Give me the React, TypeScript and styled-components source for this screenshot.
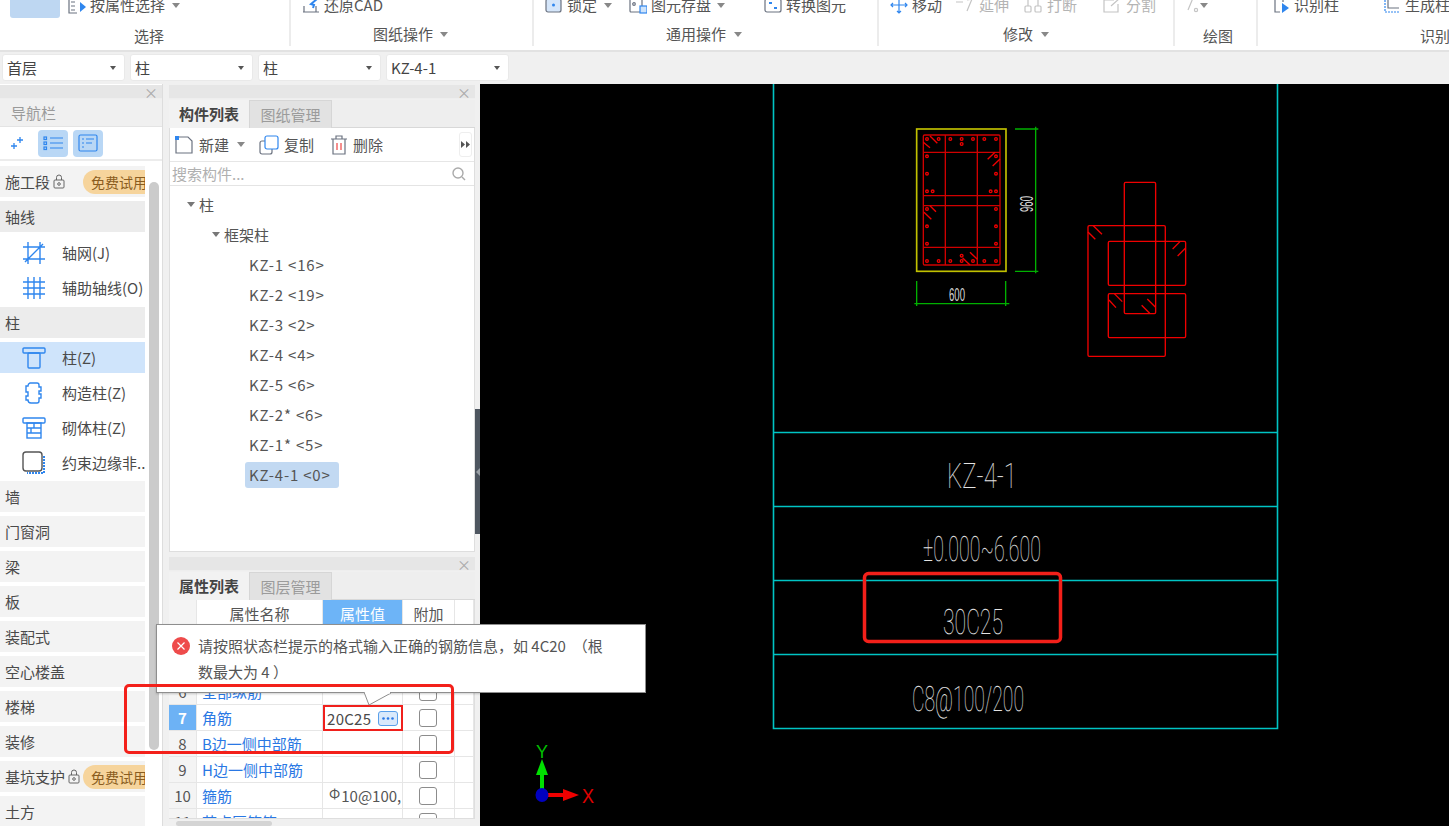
import React from "react";
import styled, { createGlobalStyle } from "styled-components";

const Global = createGlobalStyle`
  html, body { margin: 0; padding: 0; width: 1449px; height: 826px; overflow: hidden; background: #f0f0f0; }
  body { font-family: "Noto Sans CJK SC", "Liberation Sans", sans-serif; font-size: 15px; color: #4a4a4a; }
  * { box-sizing: border-box; }
`;

const Page = styled.div`
  position: relative; width: 1449px; height: 826px; overflow: hidden;
  display: flex; flex-direction: column;
`;

/* ---------- ribbon ---------- */
const Ribbon = styled.div`
  height: 52px; flex: none; background: #fff; border-bottom: 2px solid #e2e2e2; display: flex; align-items: flex-start;
`;
const Group = styled.div<{ $w: number; $last?: boolean; $pad: number }>`
  width: ${p => p.$w}px; height: 46px; flex: none; padding-left: ${p => p.$pad}px;
  border-right: ${p => (p.$last ? "none" : "2px solid #ececec")};
  display: flex; flex-direction: column;
`;
const ToolRow = styled.div`
  height: 22px; margin-top: -6px; display: flex; align-items: center; white-space: nowrap; flex: none;
`;
const Selected = styled.div`
  width: 50px; height: 26px; background: #bed7f2; border-radius: 3px; margin-right: 8px; flex: none;
`;
const Tool = styled.div<{ $ml?: number; $muted?: boolean }>`
  display: flex; align-items: center; gap: 4px; margin-left: ${p => p.$ml ?? 0}px;
  color: ${p => (p.$muted ? "#b4b4b4" : "#555")}; font-size: 15px; line-height: 22px;
`;
const Caret = styled.span<{ $ml?: number }>`
  display: inline-block; width: 0; height: 0; margin-left: ${p => p.$ml ?? 6}px;
  border-left: 4px solid transparent; border-right: 4px solid transparent; border-top: 5px solid #888;
`;
const GroupLabel = styled.div<{ $x: number; $low?: boolean }>`
  margin-top: ${p => (p.$low ? 10 : 8)}px; padding-left: ${p => p.$x}px; font-size: 15px; line-height: 20px;
  color: #555; white-space: nowrap; display: flex; align-items: center;
`;

/* ---------- selector bar ---------- */
const SelectBar = styled.div`
  height: 32px; flex: none; background: #f0f0f0; display: flex; gap: 5px; padding: 2px 0 0 2px;
`;
const Select = styled.div`
  width: 123px; height: 27px; background: #fff; border: 1px solid #e9e9e9; border-radius: 3px; padding: 0 8px 0 4px;
  display: flex; align-items: center; justify-content: space-between; font-size: 15px; color: #444; line-height: 24px;
`;
const SelectCaret = styled.span`
  width: 0; height: 0; border-left: 3px solid transparent; border-right: 3px solid transparent; border-top: 4px solid #555;
`;

/* ---------- workspace ---------- */
const Work = styled.div`
  flex: 1; min-height: 0; display: flex;
`;
const Nav = styled.div`
  position: relative; width: 163px; flex: none; background: #fff; overflow: hidden; border-right: 1px solid #ddd;
`;
const PanelBar = styled.div`
  height: 14px; margin-top: 1px; background: #e6e6e6; display: flex; justify-content: flex-end; align-items: center; padding-right: 4px;
  color: #aaa; font-size: 14px; line-height: 14px; border-bottom: 1px solid #eee; flex: none;
`;
const NavTitle = styled.div`
  height: 28px; background: #f0f0f0; color: #9a9a9a; font-size: 15px; padding-left: 11px; line-height: 27px; border-bottom: 1px solid #e4e4e4;
`;
const NavIcons = styled.div`
  height: 34px; display: flex; align-items: center; gap: 5px; padding-left: 3px; border-bottom: 2px solid #ececec;
`;
const NavIconBtn = styled.div<{ $on?: boolean }>`
  width: 30px; height: 27px; border-radius: 4px; background: ${p => (p.$on ? "#b9d7f5" : "transparent")};
  display: flex; align-items: center; justify-content: center;
`;
const NavList = styled.div`
  width: 145px; padding-top: 5px;
`;
const Section = styled.div<{ $light?: boolean; $mb?: number }>`
  height: 31px; margin-bottom: ${p => p.$mb ?? 4}px; background: ${p => (p.$light ? "#f3f3f3" : "#ececec")};
  display: flex; align-items: center; padding-left: 5px; font-size: 15px; color: #4a4a4a; white-space: nowrap; overflow: hidden;
  flex: none;
`;
const Lock = styled.svg`
  margin-left: 3px; flex: none;
`;
const Trial = styled.span<{ $ml: number }>`
  margin-left: ${p => p.$ml}px; height: 24px; padding: 0 0 0 8px; border-radius: 12px 0 0 12px; background: #f6d49c;
  color: #8a5c20; font-size: 14px; line-height: 24px; flex: none; width: 70px;
`;
const NavItem = styled.div<{ $on?: boolean; $mb?: number }>`
  height: 31px; margin-bottom: ${p => p.$mb ?? 4}px; display: flex; align-items: center; padding-left: 22px; gap: 16px;
  background: ${p => (p.$on ? "#cfe4fb" : "transparent")}; font-size: 15px; color: #4a4a4a; white-space: nowrap; overflow: hidden;
`;
const NavScroll = styled.div`
  position: absolute; left: 149px; top: 98px; width: 10px; height: 568px; border-radius: 5px; background: #cbcbcb;
`;

const Middle = styled.div`
  width: 306px; margin-left: 6px; flex: none; display: flex; flex-direction: column;
`;
const Tabs = styled.div`
  height: 28px; display: flex; background: #eeeeee; margin-top: 1px; border-bottom: 1px solid #d8d8d8; flex: none;
`;
const Tab = styled.div<{ $on?: boolean }>`
  width: ${p => (p.$on ? 81 : 82)}px; height: 28px; text-align: center; line-height: 27px; font-size: 15px;
  font-weight: ${p => (p.$on ? 700 : 400)}; color: ${p => (p.$on ? "#444" : "#9b9b9b")};
  background: ${p => (p.$on ? "#f2f2f2" : "#e2e2e2")};
  border-right: 1px solid #d6d6d6; border-top: ${p => (p.$on ? "0" : "1px solid #d6d6d6")};
`;
const ListBody = styled.div`
  height: 424px; flex: none; background: #fff; border: 1px solid #dedede; border-top: 0; display: flex; flex-direction: column;
`;
const Toolbar = styled.div`
  height: 34px; display: flex; align-items: center; padding-left: 4px; border-bottom: 1px solid #e6e6e6; position: relative; flex: none;
`;
const ToolbarBtn = styled.div<{ $ml?: number }>`
  display: flex; align-items: center; gap: 5px; font-size: 15px; color: #555; margin-left: ${p => p.$ml ?? 0}px;
`;
const More = styled.div`
  position: absolute; right: 2px; top: 4px; width: 13px; height: 25px; border-radius: 3px; background: #fff; border: 1px solid #eee;
  display: flex; align-items: center; justify-content: center;
`;
const Search = styled.div`
  height: 24px; padding: 0 8px 0 2px; display: flex; align-items: center; justify-content: space-between; color: #b0b0b0;
  font-size: 15px; border-bottom: 1px solid #e4e4e4; flex: none;
`;
const Tree = styled.div`
  padding-top: 3px; flex: 1;
`;
const TreeRow = styled.div<{ $indent: number }>`
  height: 30px; display: flex; align-items: center; padding-left: ${p => p.$indent}px; font-size: 15px; color: #555; white-space: pre;
`;
const TreeText = styled.span<{ $on?: boolean }>`
  padding: 0 ${p => (p.$on ? 8 : 4)}px 0 4px; margin-top: 1px; height: 26px; line-height: 26px; border-radius: 3px; letter-spacing: .8px;
  background: ${p => (p.$on ? "#c2d9f2" : "transparent")};
`;
const TreeCaret = styled.span`
  width: 0; height: 0; margin-right: 4px; border-left: 4px solid transparent; border-right: 4px solid transparent; border-top: 5px solid #777;
`;
const Gap = styled.div`
  height: 4px; flex: none;
`;
const Table = styled.div`
  flex: none; height: 219px; overflow: hidden; background: #fff; border-right: 1px solid #dedede; border-bottom: 1px solid #dedede;
`;
const Row = styled.div<{ $h?: number }>`
  display: grid; grid-template-columns: 28px 126px 80px 52px 1fr; height: ${p => p.$h ?? 26}px;
`;
const Cell = styled.div<{ $kind?: "num" | "numOn" | "head" | "headOn" | "name" | "val" | "chk" }>`
  display: flex; align-items: center; min-width: 0; overflow: hidden; white-space: nowrap; font-size: 15px;
  border-bottom: 1px solid #e6e6e6; border-right: 1px solid #e6e6e6;
  ${p => p.$kind === "num" && "background:#f4f4f4;justify-content:center;color:#555;"}
  ${p => p.$kind === "numOn" && "background:#6db2f5;justify-content:center;color:#fff;font-weight:700;"}
  ${p => p.$kind === "head" && "justify-content:center;color:#555;"}
  ${p => p.$kind === "headOn" && "justify-content:center;color:#fff;background:#6db4f7;"}
  ${p => p.$kind === "name" && "color:#2a78e4;padding-left:5px;"}
  ${p => p.$kind === "val" && "color:#555;padding-left:6px;"}
  ${p => p.$kind === "chk" && "justify-content:center;"}
`;
const Check = styled.span`
  width: 18px; height: 18px; border: 1px solid #8c8c8c; border-radius: 3px; background: #fff; margin-left: -1px;
`;
const BarSymbol = styled.span`
  font-size: 14px; line-height: 14px; margin: -5px 1px 0 0;
`;
const HScroll = styled.div`
  height: 5px; margin: 2px 0 0 7px; width: 96px; border-radius: 3px; background: #d4d4d4; flex: none;
`;
const EditCell = styled(Cell)`
  border: 2px solid #f0201c; padding-left: 2px; justify-content: space-between; padding-right: 3px; letter-spacing: .3px;
`;
const Dots = styled.span`
  width: 20px; height: 15px; border: 1px solid #5aa0ea; border-radius: 3px; background: #d9e9fb;
  display: flex; align-items: center; justify-content: center; flex: none;
`;
const Splitter = styled.div`
  width: 5px; flex: none; display: flex; align-items: flex-start;
`;
const Grip = styled.div`
  width: 5px; height: 125px; margin-top: 325px; background: #4e5660; display: flex; align-items: center; justify-content: center;
  &::after {
    content: ""; width: 0; height: 0; border-top: 4px solid transparent; border-bottom: 4px solid transparent; border-right: 4px solid #9aa0a6;
  }
`;
const Canvas = styled.svg`
  flex: 1; height: 742px; background: #000; display: block;
`;

/* ---------- overlays ---------- */
const Tip = styled.div`
  position: absolute; left: 156px; top: 624px; width: 490px; height: 69px; background: #fff; border: 1px solid #8e8e8e;
  padding: 8px 40px 0 41px; font-size: 15px; line-height: 26px; color: #555; box-shadow: 0 1px 2px #0003;
`;
const TipIcon = styled.svg`
  position: absolute; left: 15px; top: 12px;
`;
const TipArrow = styled.svg`
  position: absolute; left: 360px; top: 692px;
`;
const Callout = styled.div`
  position: absolute; left: 124px; top: 684px; width: 330px; height: 70px; border: 3px solid #f3201a; border-radius: 5px;
`;

/* ---------- icon helpers ---------- */
const Ic = ({ w = 18, h = 18, children }: { w?: number; h?: number; children: React.ReactNode }) => (
  <svg width={w} height={h} viewBox={`0 0 ${w} ${h}`} fill="none" stroke="#6b7280" strokeWidth="1.2" style={{ flex: "none" }}>{children}</svg>
);
const BLUE = "#2f86ee";

const LockIcon = () => (
  <Lock width="12" height="15" viewBox="0 0 12 15" fill="none" stroke="#666" strokeWidth="1">
    <rect x="1" y="6" width="10" height="8" rx="1" />
    <path d="M3.5 6V3.5a2.5 2.5 0 0 1 5 0V6" />
    <circle cx="6" cy="10" r="1.3" />
  </Lock>
);

const NavSvg = ({ children }: { children: React.ReactNode }) => (
  <svg width="24" height="24" viewBox="0 0 24 24" fill="none" stroke={BLUE} strokeWidth="1.4" style={{ flex: "none" }}>{children}</svg>
);

const names: [string, string][] = [
  ["KZ-1", "<16>"], ["KZ-2", "<19>"], ["KZ-3", "<2>"], ["KZ-4", "<4>"], ["KZ-5", "<6>"], ["KZ-2*", "<6>"], ["KZ-1*", "<5>"],
];

/* CAD drawing data, in 3x coordinates of the crop at (880,110) */
const dotsX = [141, 176, 211, 245, 279, 313, 348];
const dotsY = [139, 191, 244, 297, 349, 401];
const dots: [number, number][] = [
  ...dotsX.map(x => [x, 87] as [number, number]),
  ...dotsX.map(x => [x, 453] as [number, number]),
  ...dotsY.map(y => [141, y] as [number, number]),
  ...dotsY.map(y => [348, y] as [number, number]),
  [245, 102], [158, 244], [332, 244], [245, 437],
];
const slashes = [
  [150, 78, 172, 100], [130, 97, 150, 113], [323, 148, 345, 127], [338, 168, 360, 147],
  [150, 287, 168, 305], [132, 307, 154, 328], [270, 427, 292, 448], [248, 444, 270, 465],
  [640, 347, 666, 373], [624, 366, 646, 388], [878, 417, 900, 395], [893, 438, 917, 414],
  [703, 551, 727, 575], [687, 570, 708, 593], [802, 567, 826, 591], [785, 586, 809, 610],
];

export default function App() {
  return (
    <Page>
      <Global />
      <Ribbon>
        <Group $w={291} $pad={10}>
          <ToolRow>
            <Selected />
            <Tool>
              <Ic><path d="M9 2H1v15h8M3 6h4M3 10h4M3 14h4" /><path d="M12 6l6 5-6 5z" fill={BLUE} stroke="none" /></Ic>
              按属性选择<Caret $ml={3} />
            </Tool>
          </ToolRow>
          <GroupLabel $x={124} $low>选择</GroupLabel>
        </Group>
        <Group $w={243} $pad={11}>
          <ToolRow>
            <Tool>
              <Ic><path d="M2 10v6M1 16h16M14 10v6" /><path d="M15 3l-6 5 3 1-1 3" stroke={BLUE} strokeWidth="2" /></Ic>
              还原CAD
            </Tool>
          </ToolRow>
          <GroupLabel $x={71}>图纸操作<Caret $ml={7} /></GroupLabel>
        </Group>
        <Group $w={345} $pad={11}>
          <ToolRow>
            <Tool>
              <Ic><rect x="1" y="3" width="15" height="13" rx="2" fill="#d5e6fa" /><circle cx="8.5" cy="9" r="1.5" fill={BLUE} stroke="none" /></Ic>
              锁定<Caret $ml={3} />
            </Tool>
            <Tool $ml={17}>
              <Ic><rect x="1" y="3" width="12" height="13" rx="1" /><circle cx="5" cy="8" r="1.3" /><rect x="11" y="10" width="7" height="7" fill="#cfe4fb" stroke={BLUE} /></Ic>
              图元存盘<Caret $ml={2} />
            </Tool>
            <Tool $ml={39}>
              <Ic><rect x="1" y="3" width="16" height="13" rx="2" /><path d="M5 7h3M10 12h3" stroke={BLUE} strokeWidth="2" /></Ic>
              转换图元
            </Tool>
          </ToolRow>
          <GroupLabel $x={121}>通用操作<Caret $ml={8} /></GroupLabel>
        </Group>
        <Group $w={296} $pad={11}>
          <ToolRow>
            <Tool>
              <Ic><path d="M9 1v16M1 9h16M7 3l2-2 2 2M7 15l2 2 2-2M3 7L1 9l2 2M15 7l2 2-2 2" stroke={BLUE} /></Ic>
              移动
            </Tool>
            <Tool $ml={13} $muted>
              <Ic w={20}><path d="M1 6h7M12 4l5-1-5 12" stroke="#c4c4c4" /></Ic>
              延伸
            </Tool>
            <Tool $ml={14} $muted>
              <Ic w={20}><rect x="2" y="10" width="6" height="6" rx="1" stroke="#c4c4c4" /><rect x="12" y="10" width="6" height="6" rx="1" stroke="#c4c4c4" /><path d="M5 10V2M15 10V2" stroke="#c4c4c4" /></Ic>
              打断
            </Tool>
            <Tool $ml={25} $muted>
              <Ic w={20}><path d="M2 4h10M2 4v12h14V8M18 2L9 10" stroke="#c4c4c4" /></Ic>
              分割
            </Tool>
          </ToolRow>
          <GroupLabel $x={113}>修改<Caret $ml={8} /></GroupLabel>
        </Group>
        <Group $w={83} $pad={10}>
          <ToolRow>
            <Tool $muted>
              <Ic w={14} h={16}><path d="M8 1L3 13" stroke="#c4c4c4" /><circle cx="11" cy="13" r="1.6" stroke="#c4c4c4" /></Ic>
              <Caret $ml={-3} />
            </Tool>
          </ToolRow>
          <GroupLabel $x={18} $low>绘图</GroupLabel>
        </Group>
        <Group $w={191} $pad={14} $last>
          <ToolRow>
            <Tool>
              <Ic><path d="M1 3h12M3 3v13h5M11 3v3" /><path d="M10 7l7 5-7 5z" fill={BLUE} stroke="none" /></Ic>
              识别柱
            </Tool>
            <Tool $ml={44}>
              <Ic><path d="M2 1v15h15" strokeDasharray="2 1" stroke={BLUE} /><path d="M5 3v9h11" /></Ic>
              生成柱
            </Tool>
          </ToolRow>
          <GroupLabel $x={148} $low>识别</GroupLabel>
        </Group>
      </Ribbon>

      <SelectBar>
        <Select>首层<SelectCaret /></Select>
        <Select>柱<SelectCaret /></Select>
        <Select>柱<SelectCaret /></Select>
        <Select>KZ-4-1<SelectCaret /></Select>
      </SelectBar>

      <Work>
        <Nav>
          <PanelBar>×</PanelBar>
          <NavTitle>导航栏</NavTitle>
          <NavIcons>
            <NavIconBtn>
              <svg width="14" height="14" viewBox="0 0 14 14" stroke={BLUE} strokeWidth="1.3"><path d="M9 1v6M6 4h6M3 7v6M0 10h6" /></svg>
            </NavIconBtn>
            <NavIconBtn $on>
              <svg width="21" height="17" viewBox="0 0 21 17" fill="none" stroke={BLUE} strokeWidth="1.2"><rect x="1" y="2" width="2.5" height="2.5" /><rect x="1" y="7" width="2.5" height="2.5" /><rect x="1" y="12" width="2.5" height="2.5" /><path d="M7 3h13M7 8h13M7 13h13" /></svg>
            </NavIconBtn>
            <NavIconBtn $on>
              <svg width="20" height="18" viewBox="0 0 20 18" fill="none" stroke={BLUE} strokeWidth="1.2"><rect x="1" y="1" width="18" height="16" rx="1.5" /><path d="M4 5h2M8 5h8M4 9h2M8 9h6M4 13h2" /></svg>
            </NavIconBtn>
          </NavIcons>
          <NavList>
            <Section $light>施工段<LockIcon /><Trial $ml={18}>免费试用</Trial></Section>
            <Section $mb={5}>轴线</Section>
            <NavItem>
              <NavSvg><path d="M1 6h22M1 18h22M6 1v22M18 1v22M3 21L21 3" /></NavSvg>轴网(J)
            </NavItem>
            <NavItem>
              <NavSvg><path d="M1 6h22M1 12h22M1 18h22M6 1v22M12 1v22M18 1v22" /></NavSvg>辅助轴线(O)
            </NavItem>
            <Section>柱</Section>
            <NavItem $on>
              <NavSvg><rect x="1" y="2" width="22" height="5" rx="1" /><rect x="6" y="7" width="12" height="15" rx="1" /></NavSvg>柱(Z)
            </NavItem>
            <NavItem>
              <NavSvg><path d="M8 2h7a2 2 0 0 1 2 2v2h2v4h-2v3h2v4h-2v3a2 2 0 0 1-2 2H9a3 3 0 0 1-3-3H4v-4h2v-4H4V5h2a3 3 0 0 1 2-3z" /></NavSvg>构造柱(Z)
            </NavItem>
            <NavItem>
              <NavSvg><rect x="1" y="2" width="22" height="5" rx="1" /><rect x="5" y="7" width="14" height="15" /><path d="M5 12h14M5 17h14M12 7v5M9 12v5" /></NavSvg>砌体柱(Z)
            </NavItem>
            <NavItem $mb={3}>
              <NavSvg><rect x="1" y="1" width="19" height="19" rx="3" stroke="#555" /><path d="M22 5v17H5" strokeDasharray="2 1" strokeWidth="2" /></NavSvg>约束边缘非..
            </NavItem>
            <Section $light>墙</Section>
            <Section $light>门窗洞</Section>
            <Section $light>梁</Section>
            <Section $light>板</Section>
            <Section $light>装配式</Section>
            <Section $light>空心楼盖</Section>
            <Section $light>楼梯</Section>
            <Section $light>装修</Section>
            <Section $light>基坑支护<LockIcon /><Trial $ml={3}>免费试用</Trial></Section>
            <Section $light>土方</Section>
          </NavList>
          <NavScroll />
        </Nav>

        <Middle>
          <PanelBar>×</PanelBar>
          <Tabs><Tab $on>构件列表</Tab><Tab>图纸管理</Tab></Tabs>
          <ListBody>
            <Toolbar>
              <ToolbarBtn>
                <Ic w={20} h={20}><path d="M5 2h9l4 4v12H2V5" /><rect x="1" y="1" width="4" height="4" fill={BLUE} stroke="none" /></Ic>
                新建<Caret $ml={3} />
              </ToolbarBtn>
              <ToolbarBtn $ml={14}>
                <Ic w={20} h={20}><rect x="1" y="6" width="12" height="13" rx="2" /><rect x="6" y="1" width="13" height="13" rx="2" fill="#fff" stroke={BLUE} /></Ic>
                复制
              </ToolbarBtn>
              <ToolbarBtn $ml={16}>
                <Ic w={18} h={20}><path d="M1 4h16M3 4v15h12V4M6 4V1h6v3" /><path d="M7 8v7M11 8v7" stroke="#ef4444" /></Ic>
                删除
              </ToolbarBtn>
              <More>
                <svg width="9" height="7" viewBox="0 0 9 7" fill="#555"><path d="M0 0l4 3.5L0 7zM5 0l4 3.5L5 7z" /></svg>
              </More>
            </Toolbar>
            <Search>
              搜索构件...
              <svg width="14" height="14" viewBox="0 0 14 14" fill="none" stroke="#aaa" strokeWidth="1.4"><circle cx="6" cy="6" r="5" /><path d="M10 10l3 3" /></svg>
            </Search>
            <Tree>
              <TreeRow $indent={17}><TreeCaret />柱</TreeRow>
              <TreeRow $indent={42}><TreeCaret />框架柱</TreeRow>
              {names.map(([n, c]) => (
                <TreeRow key={n} $indent={75}><TreeText>{n} {c}</TreeText></TreeRow>
              ))}
              <TreeRow $indent={75}><TreeText $on>KZ-4-1 &lt;0&gt;</TreeText></TreeRow>
            </Tree>
          </ListBody>
          <Gap />
          <PanelBar>×</PanelBar>
          <Tabs><Tab $on>属性列表</Tab><Tab>图层管理</Tab></Tabs>
          <Table>
            <Row $h={27}>
              <Cell $kind="num" /><Cell $kind="head">属性名称</Cell><Cell $kind="headOn">属性值</Cell><Cell $kind="head">附加</Cell><Cell />
            </Row>
            {[4, 5].map(n => (
              <Row key={n}><Cell $kind="num">{n}</Cell><Cell $kind="name" /><Cell $kind="val" /><Cell $kind="chk"><Check /></Cell><Cell /></Row>
            ))}
            <Row><Cell $kind="num">6</Cell><Cell $kind="name">全部纵筋</Cell><Cell $kind="val" /><Cell $kind="chk"><Check /></Cell><Cell /></Row>
            <Row>
              <Cell $kind="numOn">7</Cell><Cell $kind="name">角筋</Cell>
              <EditCell>20C25<Dots><svg width="12" height="3" viewBox="0 0 12 3" fill="#2a78e4"><circle cx="1.5" cy="1.5" r="1.3" /><circle cx="6" cy="1.5" r="1.3" /><circle cx="10.5" cy="1.5" r="1.3" /></svg></Dots></EditCell>
              <Cell $kind="chk"><Check /></Cell><Cell />
            </Row>
            <Row><Cell $kind="num">8</Cell><Cell $kind="name">B边一侧中部筋</Cell><Cell $kind="val" /><Cell $kind="chk"><Check /></Cell><Cell /></Row>
            <Row><Cell $kind="num">9</Cell><Cell $kind="name">H边一侧中部筋</Cell><Cell $kind="val" /><Cell $kind="chk"><Check /></Cell><Cell /></Row>
            <Row><Cell $kind="num">10</Cell><Cell $kind="name">箍筋</Cell><Cell $kind="val"><BarSymbol>Φ</BarSymbol>10@100,</Cell><Cell $kind="chk"><Check /></Cell><Cell /></Row>
            <Row><Cell $kind="num">11</Cell><Cell $kind="name">节点区箍筋</Cell><Cell $kind="val" /><Cell $kind="chk"><Check /></Cell><Cell /></Row>
          </Table>
          <HScroll />
        </Middle>
        <Splitter><Grip /></Splitter>

        <Canvas viewBox="480 84 969 742">
          <g stroke="#00c4c4" strokeWidth="1.6" fill="none">
            <path d="M773.5 84V728.5H1277.5V84M773 432.5H1277M773 506.5H1277M773 580.5H1277M773 654.5H1277" />
          </g>
          <g transform="translate(880 110) scale(.3333)" fill="none">
            <rect x="110" y="57" width="268" height="427" stroke="#c0c000" strokeWidth="5" />
            <g stroke="#d00000" strokeWidth="4">
              <rect x="130" y="75" width="230" height="390" rx="4" />
              <path d="M130 127H360M130 257H360M130 287H360M130 412H360M196 75V465M292 75V465" />
              {dots.map(([x, y], i) => <circle key={i} cx={x} cy={y} r="4" stroke="#f00000" />)}
            </g>
            <g stroke="#f00000" strokeWidth="4">
              <rect x="733" y="217" width="94" height="394" rx="4" />
              <rect x="624" y="347" width="232" height="392" rx="4" />
              <rect x="685" y="394" width="232" height="132" rx="4" />
              <rect x="685" y="551" width="232" height="132" rx="4" />
              {slashes.map((s, i) => <line key={i} x1={s[0]} y1={s[1]} x2={s[2]} y2={s[3]} />)}
            </g>
            <g stroke="#00b000" strokeWidth="4">
              <path d="M467 50V490M405 57H475M405 484H475M103 581H388M110 513V588M377 513V588" />
            </g>
          </g>
          <g fill="#d8d8d8" fontFamily="'Liberation Sans', sans-serif">
            <text x="949" y="301" fontSize="18" textLength="16" lengthAdjust="spacingAndGlyphs">600</text>
            <text transform="translate(1033 212) rotate(-90)" fontSize="18" textLength="16" lengthAdjust="spacingAndGlyphs">960</text>
          </g>
          <g fill="#e4e4e4" fontFamily="Roboto, 'Liberation Sans', sans-serif" fontWeight="100" textRendering="geometricPrecision">
            <text x="947" y="488" fontSize="35" textLength="70" lengthAdjust="spacingAndGlyphs">KZ-4-1</text>
            <text x="923" y="561" fontSize="35" textLength="118" lengthAdjust="spacingAndGlyphs">±0.000~6.600</text>
            <text x="943" y="634" fontSize="35" textLength="60" lengthAdjust="spacingAndGlyphs">30C25</text>
            <text x="912" y="711" fontSize="35" textLength="112" lengthAdjust="spacingAndGlyphs">C8@100/200</text>
          </g>
          <rect x="864.5" y="573.5" width="196" height="68" rx="4" fill="none" stroke="#f3201a" strokeWidth="3.5" />
          <g>
            <path d="M542 795V772" stroke="#00e000" strokeWidth="4" />
            <path d="M542 759l6 16h-12z" fill="#00e000" />
            <path d="M542 795h22" stroke="#f00000" strokeWidth="4" />
            <path d="M579 795l-16-6v12z" fill="#f00000" />
            <ellipse cx="542" cy="795" rx="6.5" ry="7" fill="#0000c0" />
            <text x="536" y="758" fontSize="18" fill="#00c000" fontFamily="'Liberation Sans', sans-serif" textLength="12" lengthAdjust="spacingAndGlyphs">Y</text>
            <text x="582" y="803" fontSize="20" fill="#e00000" fontFamily="'Liberation Sans', sans-serif" textLength="12" lengthAdjust="spacingAndGlyphs">X</text>
          </g>
        </Canvas>
      </Work>

      <Tip>
        <TipIcon width="18" height="18" viewBox="0 0 18 18"><circle cx="9" cy="9" r="9" fill="#ee4b4b" /><path d="M5.5 5.5l7 7M12.5 5.5l-7 7" stroke="#fff" strokeWidth="1.2" /></TipIcon>
        请按照状态栏提示的格式输入正确的钢筋信息，如 4C20 &nbsp;（根数最大为 4 ）
      </Tip>
      <TipArrow width="34" height="14" viewBox="0 0 34 14">
        <path d="M4 0l5 13L31 1" fill="#fff" stroke="#8e8e8e" />
        <rect x="5" y="0" width="25" height="1.5" fill="#fff" />
      </TipArrow>
      <Callout />
    </Page>
  );
}
